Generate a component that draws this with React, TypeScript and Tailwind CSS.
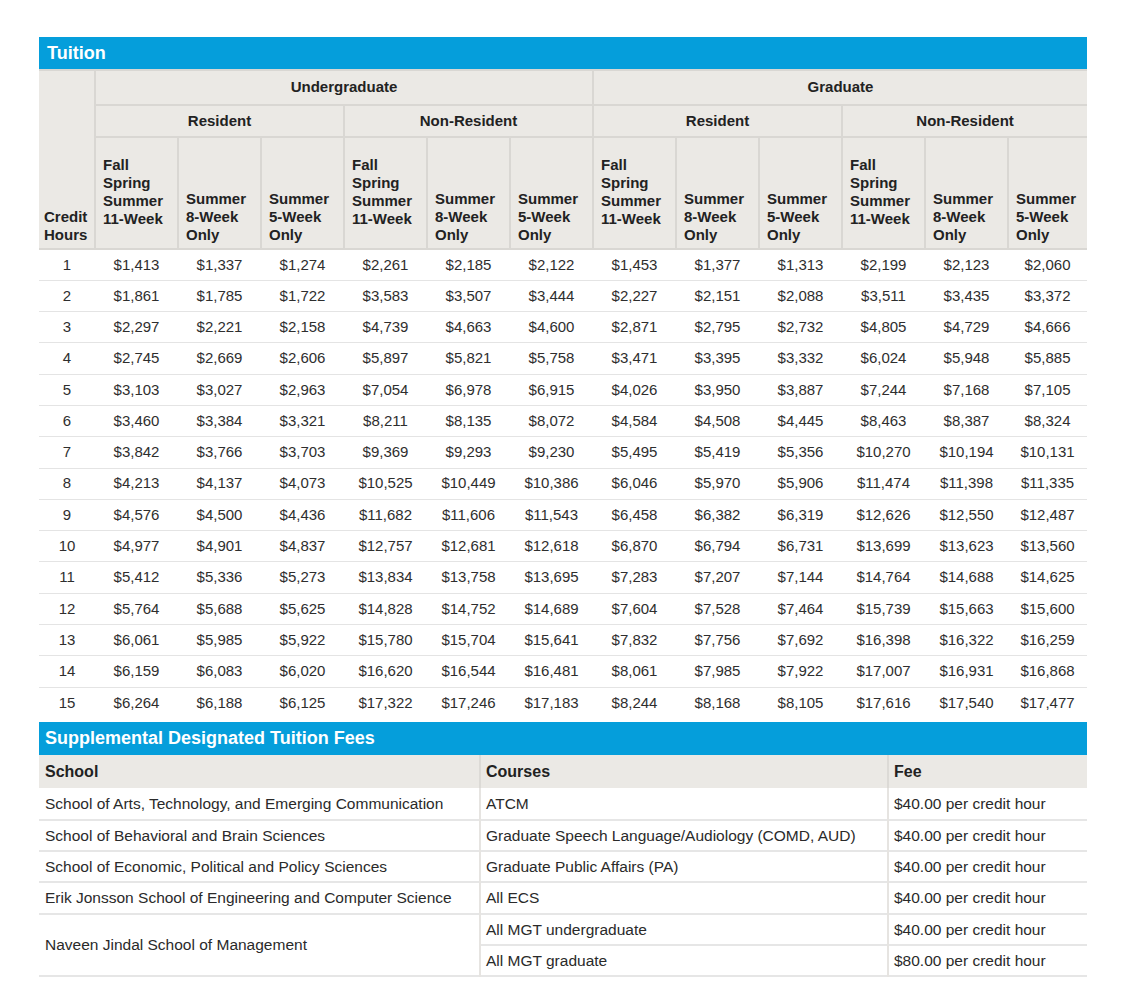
import React from "react";

const tuition: (string | number)[][] = [
  [1, "$1,413", "$1,337", "$1,274", "$2,261", "$2,185", "$2,122", "$1,453", "$1,377", "$1,313", "$2,199", "$2,123", "$2,060"],
  [2, "$1,861", "$1,785", "$1,722", "$3,583", "$3,507", "$3,444", "$2,227", "$2,151", "$2,088", "$3,511", "$3,435", "$3,372"],
  [3, "$2,297", "$2,221", "$2,158", "$4,739", "$4,663", "$4,600", "$2,871", "$2,795", "$2,732", "$4,805", "$4,729", "$4,666"],
  [4, "$2,745", "$2,669", "$2,606", "$5,897", "$5,821", "$5,758", "$3,471", "$3,395", "$3,332", "$6,024", "$5,948", "$5,885"],
  [5, "$3,103", "$3,027", "$2,963", "$7,054", "$6,978", "$6,915", "$4,026", "$3,950", "$3,887", "$7,244", "$7,168", "$7,105"],
  [6, "$3,460", "$3,384", "$3,321", "$8,211", "$8,135", "$8,072", "$4,584", "$4,508", "$4,445", "$8,463", "$8,387", "$8,324"],
  [7, "$3,842", "$3,766", "$3,703", "$9,369", "$9,293", "$9,230", "$5,495", "$5,419", "$5,356", "$10,270", "$10,194", "$10,131"],
  [8, "$4,213", "$4,137", "$4,073", "$10,525", "$10,449", "$10,386", "$6,046", "$5,970", "$5,906", "$11,474", "$11,398", "$11,335"],
  [9, "$4,576", "$4,500", "$4,436", "$11,682", "$11,606", "$11,543", "$6,458", "$6,382", "$6,319", "$12,626", "$12,550", "$12,487"],
  [10, "$4,977", "$4,901", "$4,837", "$12,757", "$12,681", "$12,618", "$6,870", "$6,794", "$6,731", "$13,699", "$13,623", "$13,560"],
  [11, "$5,412", "$5,336", "$5,273", "$13,834", "$13,758", "$13,695", "$7,283", "$7,207", "$7,144", "$14,764", "$14,688", "$14,625"],
  [12, "$5,764", "$5,688", "$5,625", "$14,828", "$14,752", "$14,689", "$7,604", "$7,528", "$7,464", "$15,739", "$15,663", "$15,600"],
  [13, "$6,061", "$5,985", "$5,922", "$15,780", "$15,704", "$15,641", "$7,832", "$7,756", "$7,692", "$16,398", "$16,322", "$16,259"],
  [14, "$6,159", "$6,083", "$6,020", "$16,620", "$16,544", "$16,481", "$8,061", "$7,985", "$7,922", "$17,007", "$16,931", "$16,868"],
  [15, "$6,264", "$6,188", "$6,125", "$17,322", "$17,246", "$17,183", "$8,244", "$8,168", "$8,105", "$17,616", "$17,540", "$17,477"],
];

const fees = [
  { school: "School of Arts, Technology, and Emerging Communication", course: "ATCM", fee: "$40.00 per credit hour" },
  { school: "School of Behavioral and Brain Sciences", course: "Graduate Speech Language/Audiology (COMD, AUD)", fee: "$40.00 per credit hour" },
  { school: "School of Economic, Political and Policy Sciences", course: "Graduate Public Affairs (PA)", fee: "$40.00 per credit hour" },
  { school: "Erik Jonsson School of Engineering and Computer Science", course: "All ECS", fee: "$40.00 per credit hour" },
];

const th = "border-2 border-[#d9d7d3] bg-[#ebe9e5] font-bold text-[#222]";
const gth = `${th} text-center align-middle text-[15px]`;
const sub = `${th} px-[7px] text-left align-bottom text-[15px] leading-[18px]`;

function SubHeads() {
  const cells = [];
  for (let g = 0; g < 4; g++) {
    cells.push(
      <th key={`a${g}`} className={`${sub} pb-[20px]`}>
        Fall<br />Spring<br />Summer<br />11-Week
      </th>,
      <th key={`b${g}`} className={`${sub} pb-[4px]`}>
        Summer<br />8-Week<br />Only
      </th>,
      <th key={`c${g}`} className={`${sub} pb-[4px]`}>
        Summer<br />5-Week<br />Only
      </th>
    );
  }
  return <tr className="h-[112px]">{cells}</tr>;
}

export default function App() {
  return (
    <div className="min-h-screen bg-white pl-[39px] pt-[37px] font-['Liberation_Sans',Arial,sans-serif]">
      {/* Tuition */}
      <table className="w-[1048px] table-fixed border-collapse border-hidden">
        <colgroup>
          <col className="w-[56px]" />
          {Array.from({ length: 11 }).map((_, i) => (
            <col key={i} className="w-[83px]" />
          ))}
          <col className="w-[79px]" />
        </colgroup>
        <thead>
          <tr className="h-[33px]">
            <th colSpan={13} className="bg-[#059edb] px-[8px] text-left align-middle text-[18px] font-bold text-white">
              Tuition
            </th>
          </tr>
          <tr className="h-[35px]">
            <th rowSpan={3} className={`${th} px-[5px] pb-[4px] text-left align-bottom text-[15px] leading-[18px]`}>
              Credit<br />Hours
            </th>
            <th colSpan={6} className={gth}>Undergraduate</th>
            <th colSpan={6} className={gth}>Graduate</th>
          </tr>
          <tr className="h-[32px]">
            <th colSpan={3} className={gth}>Resident</th>
            <th colSpan={3} className={gth}>Non-Resident</th>
            <th colSpan={3} className={gth}>Resident</th>
            <th colSpan={3} className={gth}>Non-Resident</th>
          </tr>
          <SubHeads />
        </thead>
        <tbody>
          {tuition.map((r) => (
            <tr key={r[0]} className="h-[31.3px] border-b border-[#e4e4e4] last:border-b-0">
              {r.map((v, i) => (
                <td key={i} className="p-0 text-center align-middle text-[15px] text-[#2e2e2e]">
                  {v}
                </td>
              ))}
            </tr>
          ))}
        </tbody>
      </table>

      {/* Supplemental */}
      <table className="mt-[4px] w-[1048px] table-fixed border-collapse">
        <colgroup>
          <col className="w-[441px]" />
          <col className="w-[408px]" />
          <col className="w-[199px]" />
        </colgroup>
        <thead>
          <tr className="h-[33px]">
            <th colSpan={3} className="bg-[#059edb] px-[6px] text-left align-middle text-[18px] font-bold text-white">
              Supplemental Designated Tuition Fees
            </th>
          </tr>
          <tr className="h-[33px] bg-[#ebe9e5] text-left text-[16px] font-bold text-[#222]">
            <th className="px-[6px] align-middle">School</th>
            <th className="border-l-2 border-[#dcdad6] px-[5px] align-middle">Courses</th>
            <th className="border-l-2 border-[#dcdad6] px-[5px] align-middle">Fee</th>
          </tr>
        </thead>
        <tbody className="text-[15.5px] text-[#2a2a2a]">
          {fees.map((f) => (
            <tr key={f.course} className="h-[31.3px] border-b-2 border-[#e6e6e6]">
              <td className="px-[6px] align-middle">{f.school}</td>
              <td className="border-l-2 border-[#e6e4e1] px-[5px] align-middle">{f.course}</td>
              <td className="border-l-2 border-[#e6e4e1] px-[5px] align-middle">{f.fee}</td>
            </tr>
          ))}
          <tr className="h-[31.3px] border-b-2 border-[#e6e6e6]">
            <td rowSpan={2} className="px-[6px] align-middle">Naveen Jindal School of Management</td>
            <td className="border-l-2 border-[#e6e4e1] px-[5px] align-middle">All MGT undergraduate</td>
            <td className="border-l-2 border-[#e6e4e1] px-[5px] align-middle">$40.00 per credit hour</td>
          </tr>
          <tr className="h-[31.3px] border-b-2 border-[#e6e6e6]">
            <td className="border-l-2 border-[#e6e4e1] px-[5px] align-middle">All MGT graduate</td>
            <td className="border-l-2 border-[#e6e4e1] px-[5px] align-middle">$80.00 per credit hour</td>
          </tr>
        </tbody>
      </table>
    </div>
  );
}
